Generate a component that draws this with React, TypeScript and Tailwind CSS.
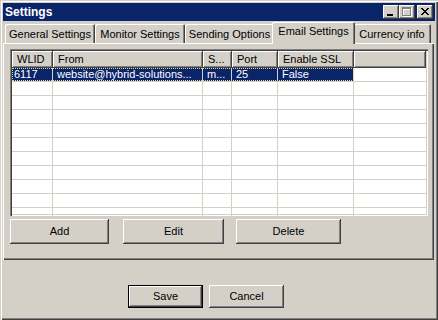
import React from "react";

const raised =
  "shadow-[inset_-1px_-1px_#404040,inset_1px_1px_#ffffff,inset_-2px_-2px_#808080]";

const tabs = [
  { label: "General Settings", w: "w-[90px]" },
  { label: "Monitor Settings", w: "w-[90px]" },
  { label: "Sending Options", w: "w-[89px]" },
  { label: "Email Settings", w: "w-[83px]", active: true },
  { label: "Currency info", w: "w-[78px]" },
];

const cols = [
  { label: "WLID", w: "w-[41px]" },
  { label: "From", w: "w-[150px]" },
  { label: "S...", w: "w-[29px]" },
  { label: "Port", w: "w-[46px]" },
  { label: "Enable SSL", w: "w-[76px]" },
];

const rows = [["6117", "website@hybrid-solutions...", "m...", "25", "False"]];

function CloseGlyph() {
  const px = [
    [0, 0], [1, 0], [6, 0], [7, 0],
    [1, 1], [2, 1], [5, 1], [6, 1],
    [2, 2], [3, 2], [4, 2], [5, 2],
    [3, 3], [4, 3],
    [2, 4], [3, 4], [4, 4], [5, 4],
    [1, 5], [2, 5], [5, 5], [6, 5],
    [0, 6], [1, 6], [6, 6], [7, 6],
  ];
  return (
    <svg width="8" height="7" shapeRendering="crispEdges">
      {px.map(([x, y]) => (
        <rect key={`${x}-${y}`} x={x} y={y} width="1" height="1" fill="#000" />
      ))}
    </svg>
  );
}

function MaxGlyph() {
  return (
    <svg width="10" height="10" shapeRendering="crispEdges">
      <g fill="#fff" transform="translate(1,1)">
        <rect x="0" y="0" width="9" height="2" />
        <rect x="0" y="0" width="1" height="9" />
        <rect x="8" y="0" width="1" height="9" />
        <rect x="0" y="8" width="9" height="1" />
      </g>
      <g fill="#808080">
        <rect x="0" y="0" width="9" height="2" />
        <rect x="0" y="0" width="1" height="9" />
        <rect x="8" y="0" width="1" height="9" />
        <rect x="0" y="8" width="9" height="1" />
      </g>
    </svg>
  );
}

function TitleButton({ children, className = "" }: { children: React.ReactNode; className?: string }) {
  return (
    <div className={`w-[16px] h-[14px] bg-[#d4d0c8] flex ${raised} ${className}`}>{children}</div>
  );
}

function Button({ label, w, isDefault }: { label: string; w: string; isDefault?: boolean }) {
  return (
    <div
      className={`${w} flex items-center justify-center bg-[#d4d0c8] ${
        isDefault
          ? "h-[23px] border border-black shadow-[inset_-1px_-1px_#404040,inset_1px_1px_#ffffff,inset_-2px_-2px_#808080]"
          : `h-[25px] ${raised}`
      }`}
    >
      {label}
    </div>
  );
}

export default function App() {
  return (
    <div className="w-[438px] h-[320px] bg-[#d4d0c8] p-[3px] flex flex-col text-[11px] text-black font-['Liberation_Sans',Arial,sans-serif] shadow-[inset_1px_1px_#d4d0c8,inset_2px_2px_#ffffff,inset_-1px_-1px_#404040,inset_-2px_-2px_#808080]">
      {/* Title bar */}
      <div className="h-[18px] bg-[#0a246a] flex items-center pl-[2px] pr-[2px]">
        <span className="text-white font-bold text-[12px] leading-none">Settings</span>
        <div className="ml-auto flex items-center">
          <TitleButton className="items-end pl-[4px] pb-[3px]">
            <div className="w-[6px] h-[2px] bg-black" />
          </TitleButton>
          <TitleButton className="items-start pl-[3px] pt-[2px]">
            <MaxGlyph />
          </TitleButton>
          <TitleButton className="ml-[2px] items-start pl-[4px] pt-[3px]">
            <CloseGlyph />
          </TitleButton>
        </div>
      </div>

      {/* Tab strip */}
      <div className="h-[22px] flex items-end pl-[2px]">
        {tabs.map(t =>
          t.active ? (
            <div
              key={t.label}
              className={`${t.w} -mx-[2px] -mb-[1px] h-[22px] relative z-10 bg-[#d4d0c8] rounded-t-[2px] flex items-center justify-center pb-[3px] shadow-[inset_1px_1px_#ffffff,inset_-1px_0_#404040,inset_-2px_0_#808080]`}
            >
              {t.label}
            </div>
          ) : (
            <div
              key={t.label}
              className={`${t.w} h-[19px] bg-[#d4d0c8] rounded-t-[2px] flex items-center justify-center pt-[1px] shadow-[inset_1px_1px_#ffffff,inset_-1px_0_#404040,inset_-2px_0_#808080]`}
            >
              {t.label}
            </div>
          )
        )}
      </div>

      {/* Tab panel */}
      <div className="w-[431px] h-[217px] pl-[7px] pt-[6px] flex flex-col shadow-[inset_1px_1px_#ffffff,inset_-1px_-1px_#404040,inset_-2px_-2px_#808080]">
        <div className="w-[418px] h-[167px] p-[2px] bg-white flex flex-col overflow-hidden shadow-[inset_1px_1px_#808080,inset_2px_2px_#404040,inset_-1px_-1px_#ffffff,inset_-2px_-2px_#d4d0c8]">
          {/* Header */}
          <div className="h-[17px] flex shrink-0 bg-[#d4d0c8]">
            {cols.map(c => (
              <div key={c.label} className={`${c.w} h-full flex items-center pl-[5px] ${raised}`}>
                {c.label}
              </div>
            ))}
            <div className={`flex-1 h-full ${raised}`} />
          </div>
          {/* Rows */}
          {Array.from({ length: 11 }).map((_, i) => {
            const r = rows[i];
            return (
              <div key={i} className="h-[14px] shrink-0 flex border-b border-[#d4d0c8]">
                <div
                  className={`flex ${
                    r ? "bg-[#0a246a] text-white outline outline-1 outline-dotted outline-[#e8d890] -outline-offset-1" : ""
                  }`}
                >
                  {cols.map((c, j) => (
                    <div
                      key={c.label}
                      className={`${c.w} h-full flex items-center border-r border-[#d4d0c8] whitespace-nowrap overflow-hidden ${
                        j === 0 ? "pl-[2px]" : "pl-[4px]"
                      }`}
                    >
                      {r ? r[j] : ""}
                    </div>
                  ))}
                </div>
                <div className="flex-1" />
              </div>
            );
          })}
        </div>

        <div className="mt-[3px] flex">
          <Button label="Add" w="w-[99px]" />
          <div className="ml-[14px]">
            <Button label="Edit" w="w-[101px]" />
          </div>
          <div className="ml-[12px]">
            <Button label="Delete" w="w-[105px]" />
          </div>
        </div>
      </div>

      {/* Dialog buttons */}
      <div className="flex-1 pl-[125px] pt-[25px] flex items-start gap-[6px]">
        <Button label="Save" w="w-[75px]" isDefault />
        <div className="h-[23px] w-[75px] flex items-center justify-center shadow-[inset_-1px_-1px_#404040,inset_1px_1px_#ffffff,inset_-2px_-2px_#808080]">
          Cancel
        </div>
      </div>
    </div>
  );
}
